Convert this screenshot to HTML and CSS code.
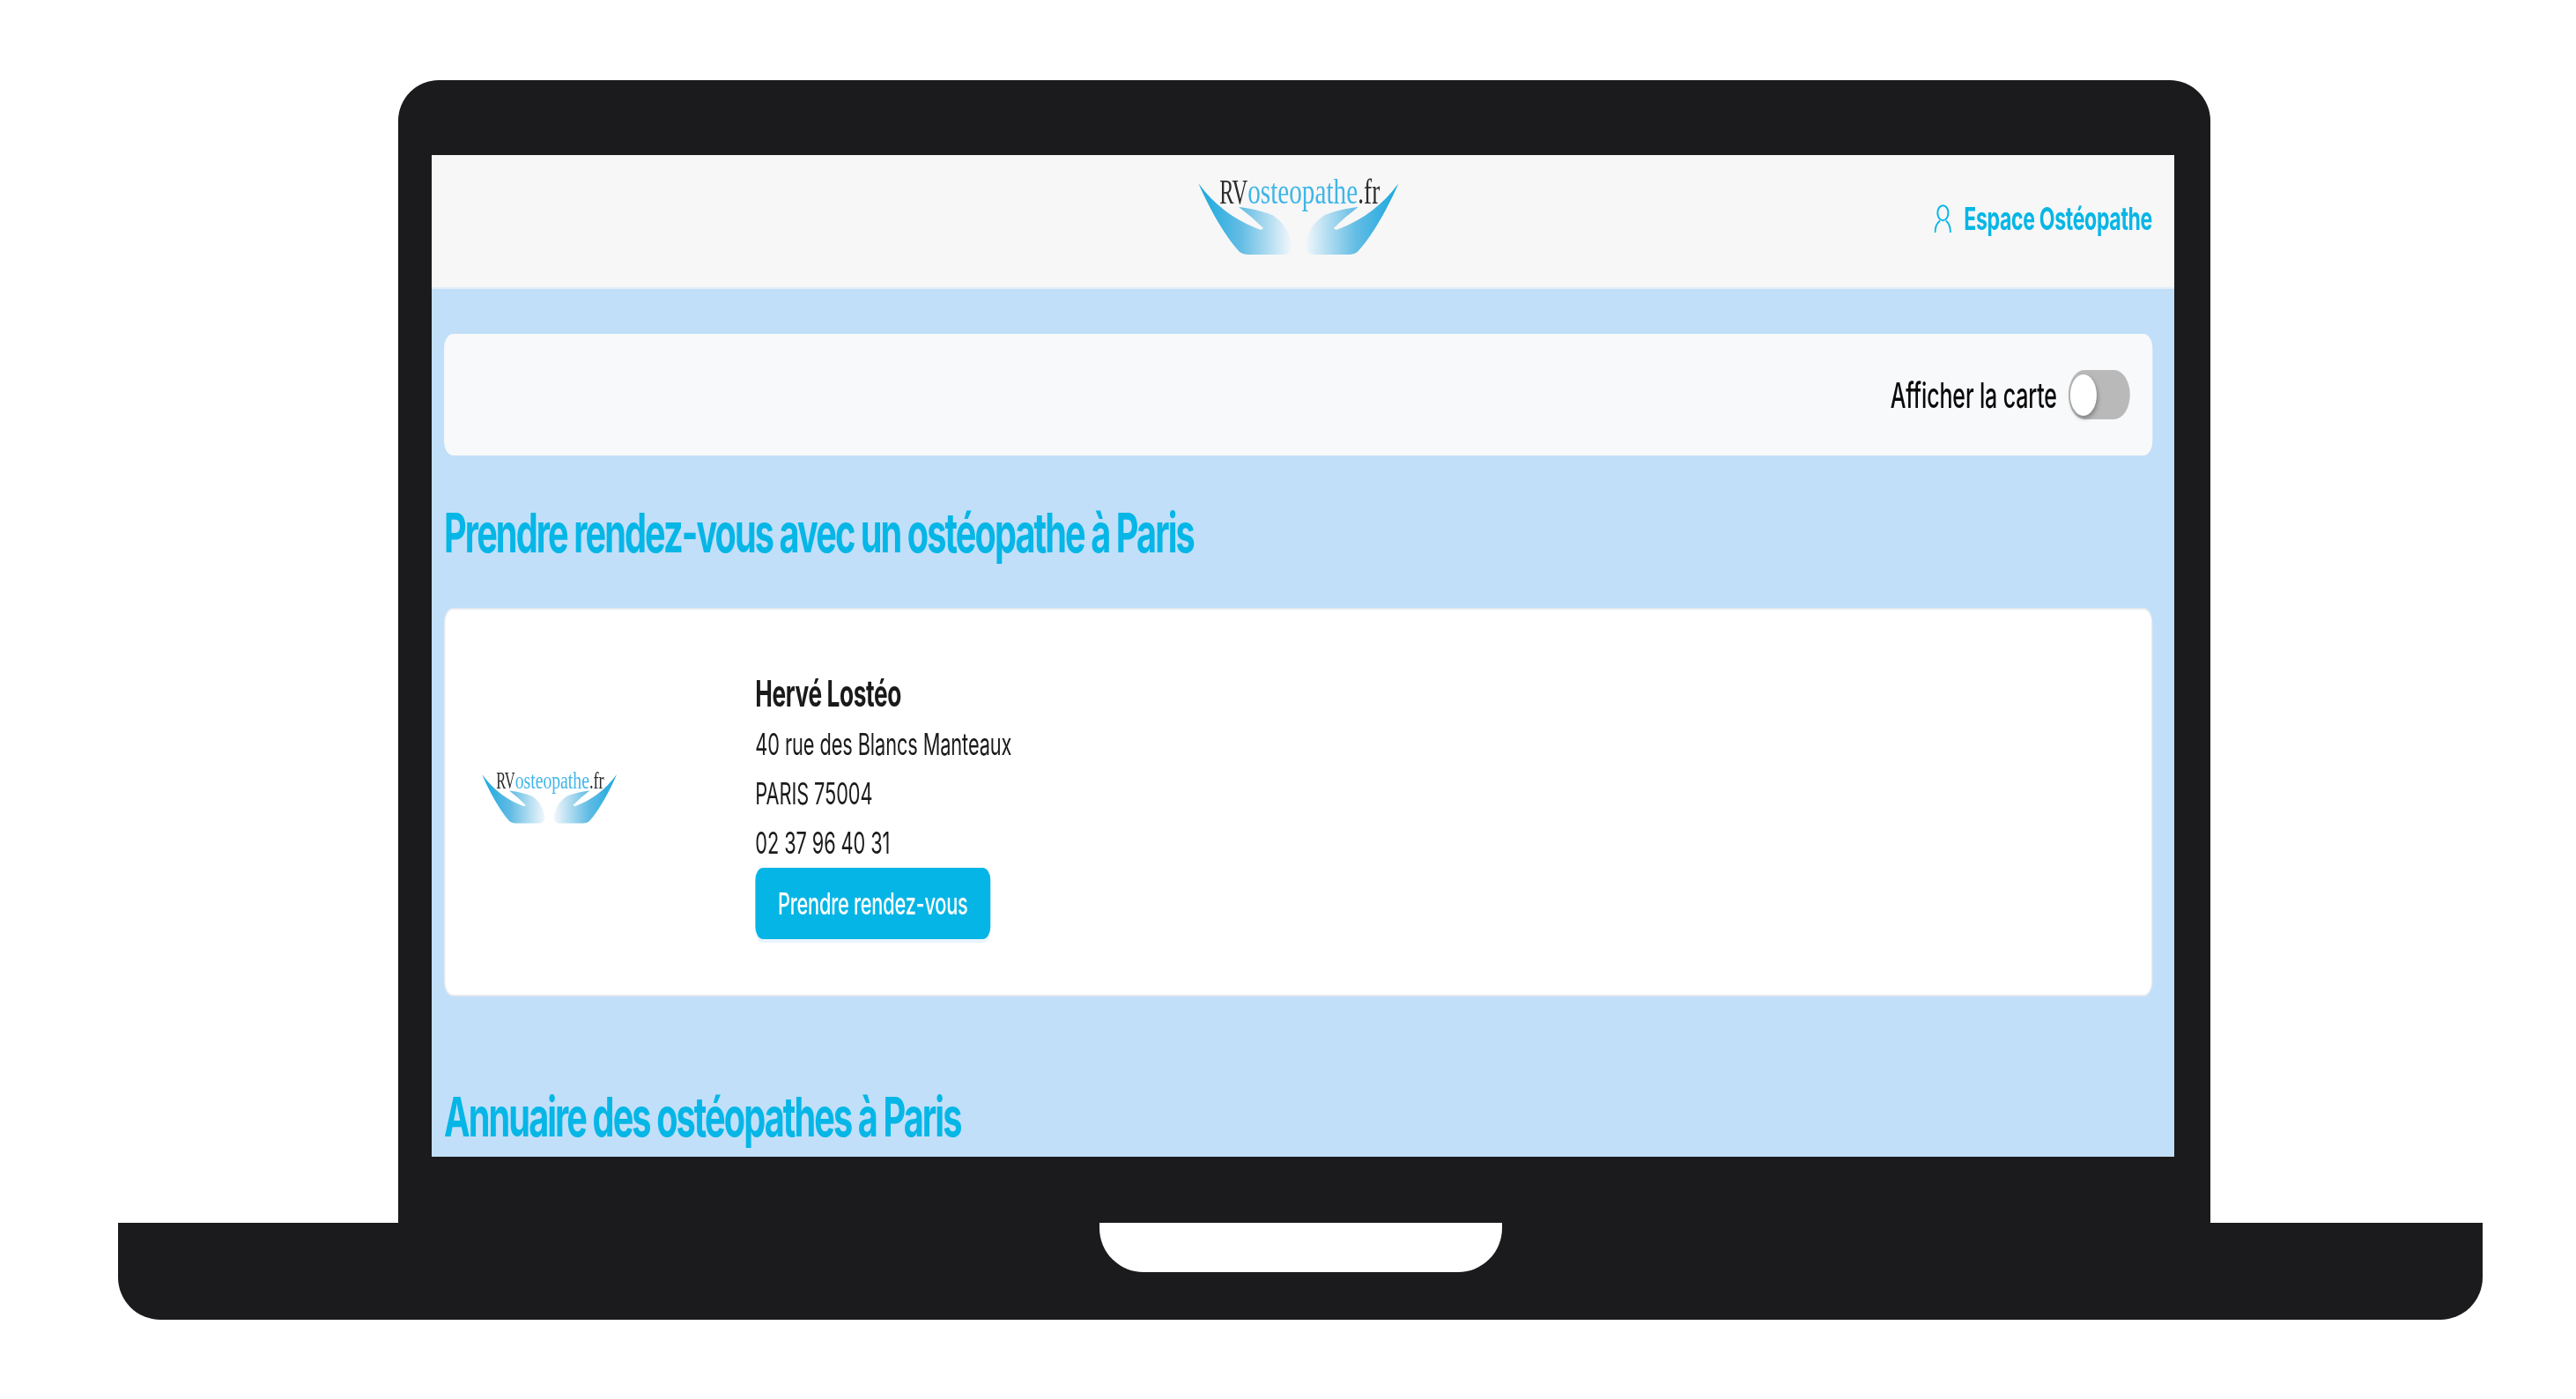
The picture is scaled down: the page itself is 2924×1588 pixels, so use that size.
FILE: index.html
```html
<!DOCTYPE html>
<html lang="fr">
<head>
<meta charset="utf-8">
<title>RVosteopathe.fr</title>
<link rel="stylesheet" href="styles.css">
</head>
<body>
<div class="laptop">
  <div class="lid">
    <div class="screen">
      <div class="page">
        <header class="topbar">
          <div class="topbar-side"></div>
          <svg class="logo logo-large" viewBox="0 0 229 90" preserveAspectRatio="none">
            <defs>
              <linearGradient id="wing" x1="0" y1="0" x2="1" y2="0">
                <stop offset="0" stop-color="#18a8de"/>
                <stop offset=".45" stop-color="#62bce4"/>
                <stop offset="1" stop-color="#f2f7fb"/>
              </linearGradient>
            </defs>
            <path fill="url(#wing)" d="M1.3 7.3C12 32 30 66 48 85Q52 88 58 88L96 88Q107 88 107 78C104 60 96 50 85 43C72 38 58 35 47 34L62 46L75 58L72 60C45 50 22 35 1.3 7.3Z"/>
            <path fill="url(#wing)" transform="matrix(-1 0 0 1 229.5 0)" d="M1.3 7.3C12 32 30 66 48 85Q52 88 58 88L96 88Q107 88 107 78C104 60 96 50 85 43C72 38 58 35 47 34L62 46L75 58L72 60C45 50 22 35 1.3 7.3Z"/>
            <text class="logo-text" x="25" y="30" textLength="32" lengthAdjust="spacingAndGlyphs">RV</text>
            <text class="logo-text logo-blue" x="57" y="30" textLength="125" lengthAdjust="spacingAndGlyphs">osteopathe</text>
            <text class="logo-text" x="182" y="30" textLength="25" lengthAdjust="spacingAndGlyphs">.fr</text>
          </svg>
          <div class="topbar-side topbar-end">
            <a class="account" href="#">
              <svg class="account-icon" viewBox="0 0 19 33" preserveAspectRatio="none">
                <ellipse cx="9.7" cy="9.7" rx="6" ry="8.5"/>
                <path d="M.8 32C1 25 3.5 20.5 6.5 18.5M18.3 32C18 25 16 20.5 13 18.5"/>
              </svg>
              <span>Espace Ostéopathe</span>
            </a>
          </div>
        </header>
        <main class="content">
          <section class="map-panel">
            <span class="map-label">Afficher la carte</span>
            <span class="switch"><span class="knob"></span></span>
          </section>
          <h2 class="title title-first">Prendre rendez-vous avec un ostéopathe à Paris</h2>
          <article class="card">
            <svg class="logo logo-small" viewBox="0 0 229 90" preserveAspectRatio="none">
              <path fill="url(#wing)" d="M1.3 7.3C12 32 30 66 48 85Q52 88 58 88L96 88Q107 88 107 78C104 60 96 50 85 43C72 38 58 35 47 34L62 46L75 58L72 60C45 50 22 35 1.3 7.3Z"/>
              <path fill="url(#wing)" transform="matrix(-1 0 0 1 229.5 0)" d="M1.3 7.3C12 32 30 66 48 85Q52 88 58 88L96 88Q107 88 107 78C104 60 96 50 85 43C72 38 58 35 47 34L62 46L75 58L72 60C45 50 22 35 1.3 7.3Z"/>
              <text class="logo-text" x="25" y="30" textLength="32" lengthAdjust="spacingAndGlyphs">RV</text>
              <text class="logo-text logo-blue" x="57" y="30" textLength="125" lengthAdjust="spacingAndGlyphs">osteopathe</text>
              <text class="logo-text" x="182" y="30" textLength="25" lengthAdjust="spacingAndGlyphs">.fr</text>
            </svg>
            <div class="details">
              <div class="name">Hervé Lostéo</div>
              <div class="line">40 rue des Blancs Manteaux</div>
              <div class="line">PARIS 75004</div>
              <div class="line">02 37 96 40 31</div>
              <a class="book" href="#">Prendre rendez-vous</a>
            </div>
          </article>
          <h2 class="title title-second">Annuaire des ostéopathes à Paris</h2>
        </main>
      </div>
    </div>
  </div>
  <div class="base"><div class="notch"></div></div>
</div>
</body>
</html>
```
FILE: styles.css
```css
* { box-sizing: border-box; }
html, body { margin: 0; padding: 0; background: #fff; }
body { width: 2924px; height: 1588px; overflow: hidden; font-family: Inter, "Liberation Sans", sans-serif; }

.laptop { padding-top: 91px; }
.lid {
  margin-left: 452px;
  width: 2057px;
  height: 1297px;
  padding: 85px 0 0 38px;
  background: #1b1a1c;
  border-radius: 46px 46px 0 0;
}
.screen { width: 1978px; height: 1137px; overflow: hidden; background: #c2dff9; }
.page { width: 3090.6px; transform: scaleX(.64); transform-origin: 0 0; }

.base {
  margin-left: 134px;
  width: 2684px;
  height: 110px;
  display: flex;
  justify-content: center;
  background: #1b1a1c;
  border-radius: 0 0 48px 48px;
}
.notch { width: 457px; height: 56px; background: #fff; border-radius: 0 0 50px 50px; }

.topbar {
  height: 152px;
  padding: 0 39px 0 22px;
  display: flex;
  align-items: center;
  background: #f7f7f7;
  border-bottom: 2px solid #e3eef8;
}
.topbar-side { flex: 1; display: flex; }
.topbar-end { justify-content: flex-end; }
.logo { display: block; flex: none; filter: blur(.5px); }
.logo-large { width: 358px; height: 90px; margin-bottom: 10px; }
.logo-small { width: 241px; height: 62px; margin: 0 245px 18px 64px; }
.logo-text { font-family: "Liberation Serif", serif; font-size: 41px; fill: #2b2b2b; }
.logo-blue { fill: #3fb6e8; }

.account {
  display: flex;
  align-items: center;
  gap: 23px;
  margin-bottom: 6px;
  color: #06b6e6;
  text-decoration: none;
  font-size: 36px;
  font-weight: 700;
  letter-spacing: -.5px;
}
.account-icon { width: 30px; height: 33px; fill: none; stroke: #06b6e6; stroke-width: 2; }

.content { padding: 51px 39px 0 22px; }
.map-panel {
  height: 138px;
  padding-right: 40px;
  display: flex;
  align-items: center;
  justify-content: flex-end;
  gap: 20px;
  background: #f8f9fb;
  border-radius: 16px;
}
.map-label { font-size: 39px; font-weight: 500; letter-spacing: -.2px; color: #0a0a0a; }
.switch {
  width: 109px;
  height: 56px;
  padding: 5px 3px;
  display: flex;
  background: #b8b9b8;
  border-radius: 28px;
}
.knob { width: 47px; height: 47px; background: #fff; border-radius: 50%; box-shadow: 2px 3px 6px rgba(0,0,0,.3); }

.title { margin: 0; font-size: 62px; line-height: 74px; font-weight: 700; letter-spacing: -3px; color: #06b6e6; }
.title-first { margin-top: 51px; margin-bottom: 48px; }
.title-second { margin-top: 100px; }

.card {
  display: flex;
  align-items: center;
  padding: 69px 0 63px;
  background: #fff;
  border: 2px solid #e6eaef;
  border-radius: 16px;
}
.details { color: #1a1a1a; }
.name { font-size: 41px; line-height: 56px; height: 56px; margin-top: -2px; margin-bottom: 2px; font-weight: 700; letter-spacing: -.6px; }
.line { font-size: 34px; line-height: 56px; letter-spacing: -.15px; }
.book {
  display: inline-flex;
  align-items: center;
  height: 81px;
  padding: 0 40px;
  color: #fff;
  text-decoration: none;
  font-size: 34px;
  font-weight: 500;
  letter-spacing: -.35px;
  background: #05b5e5;
  border-radius: 14px;
  box-shadow: 0 4px 0 #e8f4fd;
}
```
